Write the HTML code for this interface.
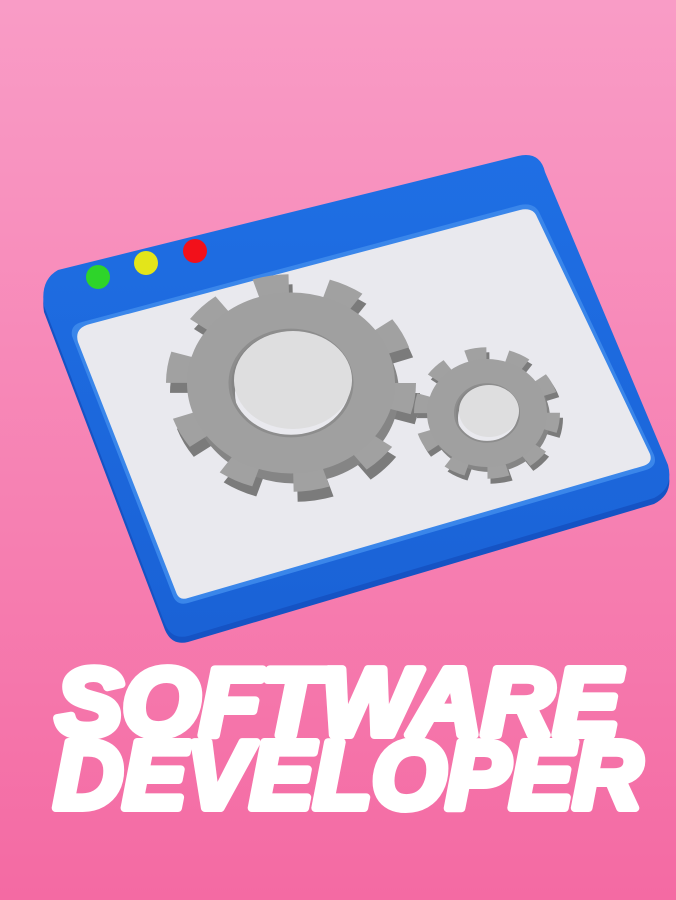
<!DOCTYPE html>
<html><head><meta charset="utf-8"><style>
html,body{margin:0;padding:0;width:676px;height:900px;overflow:hidden}
body{background:linear-gradient(#f99cc6,#f67fb1 60%,#f46aa3)}
svg{position:absolute;left:0;top:0}
</style></head><body>
<svg width="676" height="900" viewBox="0 0 676 900">
<defs>
<linearGradient id="bl" x1="0" y1="0" x2="0" y2="1"><stop offset="0" stop-color="#1f6fe4"/><stop offset="1" stop-color="#1a62d6"/></linearGradient>
</defs>
<path d="M58,270 L518,156 Q540,151 545,172 L668,465 Q674,488 654,498 L188,636 Q172,640 165,624 L44,306 Q40,280 58,270 Z" fill="#1553c4" transform="translate(0,6)"/>
<path d="M58,270 L518,156 Q540,151 545,172 L668,465 Q674,488 654,498 L188,636 Q172,640 165,624 L44,306 Q40,280 58,270 Z" fill="url(#bl)"/>
<path d="M82,322 L520,205 Q535,202 540,214 L654,455 Q658,466 646,470 L188,603 Q177,606 173,596 L72,336 Q70,325 82,322 Z" fill="#3a86ea"/>
<path d="M90,324 L520,210 Q533,207 537,217 L650,454 Q653,463 643,466 L188,598 Q179,601 176,592 L78,342 Q74,328 90,324 Z" fill="#e9e9ee"/>
<ellipse cx="98" cy="277" rx="12" ry="12" fill="#2ed42a"/>
<ellipse cx="146" cy="263" rx="12" ry="12" fill="#e3e51a"/>
<ellipse cx="195" cy="251" rx="12" ry="12" fill="#f2101a"/>
<g transform="translate(295,393) scale(1,0.87)">
  <circle r="113" fill="none" stroke="#7b7b7b" stroke-width="24" stroke-dasharray="33 38"/>
  <circle r="82" fill="none" stroke="#858585" stroke-width="44"/>
</g>
<g transform="translate(291,383) scale(1,0.87)">
  <circle r="113" fill="none" stroke="#a1a1a1" stroke-width="24" stroke-dasharray="33 38"/>
  <circle r="82" fill="none" stroke="#a0a0a0" stroke-width="44"/>
  <circle r="61" fill="none" stroke="#8d8d8d" stroke-width="3"/>
</g>
<ellipse cx="293" cy="380" rx="59" ry="49" fill="#dededf"/>
<g transform="translate(490,418) scale(1,0.9)">
  <circle r="65" fill="none" stroke="#7b7b7b" stroke-width="16" stroke-dasharray="20 20.8"/>
  <circle r="46" fill="none" stroke="#858585" stroke-width="28"/>
</g>
<g transform="translate(487,413) scale(1,0.9)">
  <circle r="65" fill="none" stroke="#a1a1a1" stroke-width="16" stroke-dasharray="20 20.8"/>
  <circle r="46" fill="none" stroke="#a0a0a0" stroke-width="28"/>
  <circle r="32" fill="none" stroke="#8d8d8d" stroke-width="2"/>
</g>
<ellipse cx="489" cy="411" rx="30" ry="26" fill="#dededf"/>
<g font-family="Liberation Sans, sans-serif" font-weight="bold" font-style="italic" fill="#fff" stroke="#fff" stroke-width="8" stroke-linejoin="round">
<text x="56" y="735" font-size="96" textLength="564" lengthAdjust="spacingAndGlyphs">SOFTWARE</text>
<text x="54" y="808" font-size="96" textLength="588" lengthAdjust="spacingAndGlyphs">DEVELOPER</text>
</g>
</svg>
</body></html>
